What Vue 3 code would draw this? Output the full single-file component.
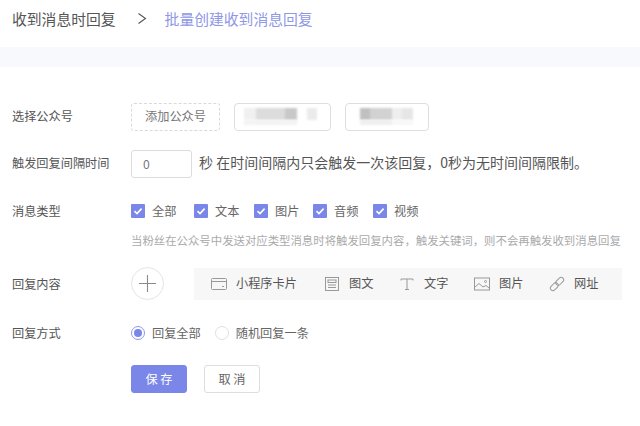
<script setup>
const chips = [
  { w: 97, blocks: [[12, '#f0f0f0'], [29, '#dcdcdc'], [12, '#c8c8c8'], [10, '#fff'], [10, '#ebebeb']], under: [[53, '#f3f3f3']] },
  { w: 84, blocks: [[5, '#fff'], [10, '#c0c0c0'], [22, '#d2d2d2'], [10, '#eeeeee'], [11, '#e6e6e6']], under: [[5, '#fff'], [32, '#efefef'], [21, '#f8f8f8']] }
]
const types = [
  { label: '全部', w: 63 },
  { label: '文本', w: 60 },
  { label: '图片', w: 59 },
  { label: '音频', w: 60 },
  { label: '视频', w: 60 }
]
const tools = [
  { key: 'card', label: '小程序卡片', w: 113 },
  { key: 'news', label: '图文', w: 75 },
  { key: 'text', label: '文字', w: 75 },
  { key: 'image', label: '图片', w: 75 },
  { key: 'link', label: '网址', w: 75 }
]
</script>

<template>
  <div class="page">
    <header class="crumbs">
      <span class="crumb">收到消息时回复</span>
      <svg class="chev" width="10" height="14" viewBox="0 0 10 14"><path d="M1.5 1.5 8.5 6.5 1.5 11.5" fill="none" stroke="#555" stroke-width="1.1" /></svg>
      <span class="crumb active">批量创建收到消息回复</span>
    </header>
    <div class="band"></div>

    <main class="form">
      <section class="row r-account">
        <label class="label">选择公众号</label>
        <div class="ctrl">
          <button class="dashed">添加公众号</button>
          <div v-for="(c, i) in chips" :key="i" class="chip" :style="{ width: c.w + 'px' }">
            <div class="blur-wrap">
              <div class="blur">
                <i v-for="(b, j) in c.blocks" :key="j" :style="{ width: b[0] + 'px', background: b[1] }"></i>
              </div>
              <div class="blur under">
                <i v-for="(b, j) in c.under" :key="j" :style="{ width: b[0] + 'px', background: b[1] }"></i>
              </div>
            </div>
          </div>
        </div>
      </section>

      <section class="row r-interval">
        <label class="label">触发回复间隔时间</label>
        <div class="ctrl">
          <div class="input">0</div>
          <span class="note">秒 在时间间隔内只会触发一次该回复，0秒为无时间间隔限制。</span>
        </div>
      </section>

      <section class="row r-types">
        <label class="label low">消息类型</label>
        <div class="ctrl checks">
          <span v-for="t in types" :key="t.label" class="check" :style="{ width: t.w + 'px' }">
            <span class="box">
              <svg width="10" height="10" viewBox="0 0 10 10"><path d="M1.5 5.2 4 7.6 8.6 2.6" fill="none" stroke="#fff" stroke-width="1.6" /></svg>
            </span>
            <span class="check-text">{{ t.label }}</span>
          </span>
        </div>
      </section>

      <p class="hint">当粉丝在公众号中发送对应类型消息时将触发回复内容，触发关键词，则不会再触发收到消息回复</p>

      <section class="row r-content">
        <label class="label low">回复内容</label>
        <div class="ctrl">
          <div class="plus">
            <svg width="17" height="17" viewBox="0 0 17 17"><path d="M8.5 0V17M0 8.5H17" stroke="#8a8a8a" stroke-width="1.1" /></svg>
          </div>
          <div class="tools">
            <span v-for="t in tools" :key="t.key" class="tool" :style="{ width: t.w + 'px' }">
              <svg class="ico" width="16" height="16" viewBox="0 0 16 16" fill="none" stroke="#999" stroke-width="1">
                <template v-if="t.key === 'card'">
                  <rect x="0.5" y="2.5" width="15" height="11" rx="1" />
                  <path d="M0.5 5.5H15.5M11 10.5H13" />
                </template>
                <template v-else-if="t.key === 'news'">
                  <rect x="1.5" y="1.5" width="13" height="13" />
                  <rect x="4" y="4" width="8" height="2.5" />
                  <path d="M4 9H12M4 11.5H12" />
                </template>
                <template v-else-if="t.key === 'text'">
                  <path d="M2 4.5V3H14V4.5M8 3V13.5M6 13.5H10" />
                </template>
                <template v-else-if="t.key === 'image'">
                  <rect x="0.5" y="2" width="15" height="12" />
                  <path d="M1 11 5 7.5 9 11 12 9.5 15 12" />
                  <circle cx="11.5" cy="5.5" r="1" />
                </template>
                <template v-else>
                  <rect x="8.2" y="0.8" width="5" height="9" rx="2.5" transform="rotate(45 10.7 5.3)" />
                  <rect x="2.8" y="6.2" width="5" height="9" rx="2.5" transform="rotate(45 5.3 10.7)" />
                </template>
              </svg>
              <span class="tool-text">{{ t.label }}</span>
            </span>
          </div>
        </div>
      </section>

      <section class="row r-mode">
        <label class="label low">回复方式</label>
        <div class="ctrl radios">
          <span class="radio on"><i class="dot"><b></b></i><span class="check-text">回复全部</span></span>
          <span class="radio"><i class="dot"></i><span class="check-text">随机回复一条</span></span>
        </div>
      </section>

      <section class="row r-actions">
        <label class="label"></label>
        <div class="ctrl">
          <button class="btn primary">保 存</button>
          <button class="btn">取 消</button>
        </div>
      </section>
    </main>
  </div>
</template>

<style>
html, body { margin: 0; background: #fff; }
</style>

<style scoped>
.page {
  width: 640px;
  height: 426px;
  overflow: hidden;
  background: #fff;
  font-family: "Noto Sans CJK SC", "Liberation Sans", sans-serif;
  color: #555;
  font-size: 12.2px;
}
.crumbs {
  height: 47px;
  box-sizing: border-box;
  padding: 0 0 9px 12px;
  display: flex;
  align-items: center;
}
.crumb { font-size: 14.8px; color: #555; line-height: 20px; }
.crumb.active { color: #8f97e6; }
.chev { margin: 0 18px 0 21px; }
.band { height: 20px; background: #f8f9fd; }
.form { padding-left: 12px; }
.row { display: flex; align-items: center; }
.label { width: 119px; flex: none; color: #555; padding-bottom: 2px; }
.label.low { padding-bottom: 0; }
.ctrl { display: flex; align-items: center; }
.r-account { margin-top: 36px; height: 28px; }
.dashed {
  width: 89px;
  height: 28px;
  box-sizing: border-box;
  border: 1px dashed #d9d9d9;
  border-radius: 3px;
  background: #fff;
  color: #777;
  font: inherit;
  padding: 0 0 2px;
  margin-right: 14px;
}
.chip {
  height: 28px;
  box-sizing: border-box;
  border: 1px solid #dedede;
  border-radius: 4px;
  margin-right: 14px;
  overflow: hidden;
  padding: 4px 0 0 9px;
}
.blur { display: flex; filter: blur(0.8px); height: 12px; }
.blur.under { height: 5px; }
.blur i { display: block; }
.r-interval { margin-top: 19px; height: 28px; }
.input {
  width: 61px;
  height: 28px;
  box-sizing: border-box;
  border: 1px solid #dcdcdc;
  border-radius: 3px;
  padding-left: 11px;
  line-height: 26px;
  color: #777;
  margin-right: 7px;
}
.note { font-size: 14px; color: #555; padding-bottom: 4px; white-space: nowrap; }
.r-types { margin-top: 26px; height: 14px; }
.check { display: flex; align-items: center; color: #666; line-height: 14px; flex: none; }
.check-text { padding-bottom: 1px; }
.box {
  width: 14px;
  height: 14px;
  background: #7a86e8;
  border-radius: 1px;
  margin-right: 7px;
  display: flex;
  align-items: center;
  justify-content: center;
}
.hint {
  margin: 14px 0 0 119px;
  font-size: 11.4px;
  line-height: 16px;
  color: #aaa;
  white-space: nowrap;
}
.r-content { margin-top: 19px; height: 33px; }
.plus {
  width: 33px;
  height: 33px;
  box-sizing: border-box;
  border: 1px solid #e4e4e4;
  border-radius: 50%;
  display: flex;
  align-items: center;
  justify-content: center;
  margin-right: 30px;
}
.tools {
  width: 428px;
  height: 32px;
  background: #f7f7f7;
  display: flex;
  align-items: center;
  padding-left: 17px;
  box-sizing: border-box;
}
.tool { display: flex; align-items: center; color: #555; flex: none; }
.tool-text { padding-bottom: 1px; }
.ico { margin-right: 9px; flex: none; }
.r-mode { margin-top: 24px; height: 18px; }
.radios { color: #666; }
.radio { display: flex; align-items: center; margin-right: 14px; }
.dot {
  width: 14px;
  height: 14px;
  box-sizing: border-box;
  border: 1px solid #e0e0e0;
  border-radius: 50%;
  margin-right: 7px;
  display: flex;
  align-items: center;
  justify-content: center;
}
.radio.on .dot { border-color: #8f97e6; }
.dot b { width: 8px; height: 8px; border-radius: 50%; background: #7a86e8; display: block; }
.r-actions { margin-top: 23px; height: 28px; }
.btn {
  width: 56px;
  height: 28px;
  box-sizing: border-box;
  border: 1px solid #dedede;
  border-radius: 3px;
  background: #fff;
  color: #666;
  font: inherit;
  padding: 0 0 1px;
  margin-right: 17px;
}
.btn.primary { background: #7a86e8; border-color: #7a86e8; color: #fff; }
</style>
